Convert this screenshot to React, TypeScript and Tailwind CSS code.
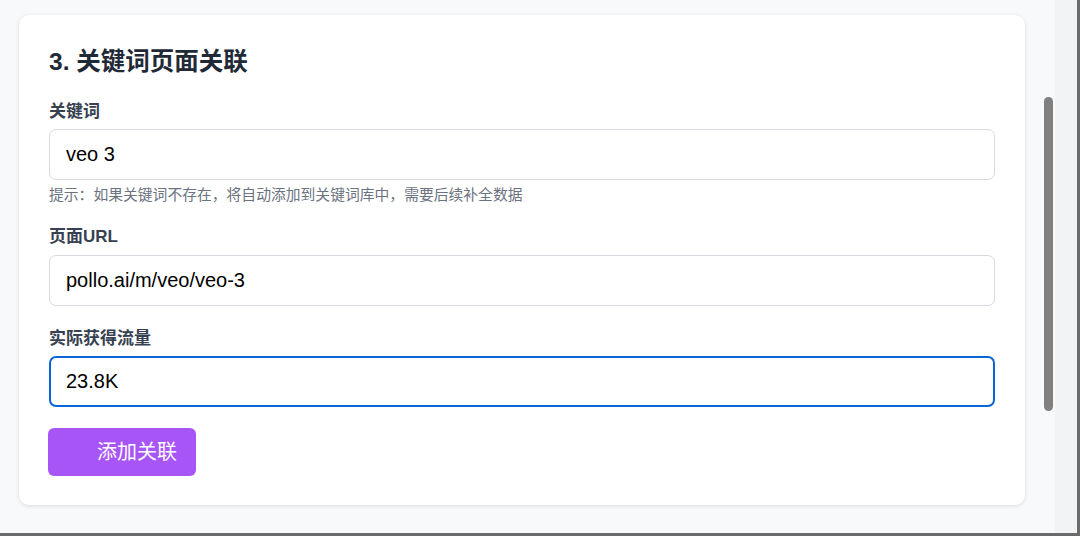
import { useState } from "react";

const font = "font-['Helvetica','Liberation_Sans','Noto_Sans_CJK_SC',sans-serif]";

export default function App() {
  const [keyword, setKeyword] = useState("veo 3");
  const [url, setUrl] = useState("pollo.ai/m/veo/veo-3");
  const [traffic, setTraffic] = useState("23.8K");

  return (
    <div className={`relative flex h-[536px] w-[1080px] overflow-hidden border-r-[3px] border-b-[3px] border-[#6b6b6b] bg-[#f8f9fb] ${font}`}>
      <div className="w-[1055px] shrink-0 pt-[15px] pl-[19px] pr-[30px]">
        <div className="rounded-[10px] bg-white px-[30px] pt-[31px] pb-[29px] shadow-[0_1px_4px_rgba(0,0,0,0.12)]">
          <h2 className="mb-[22px] text-[24.5px] leading-[32px] font-bold text-[#1f2937]">
            3. 关键词页面关联
          </h2>

          <label className="mb-[5px] block text-[17px] leading-6 font-semibold text-[#374151]">关键词</label>
          <input
            value={keyword}
            onChange={(e) => setKeyword(e.target.value)}
            className="block h-[51px] w-full rounded-[7px] border border-[#d6d9de] px-4 text-[20px] text-black outline-none"
          />
          <p className="mt-[5px] text-[14.8px] leading-5 text-[#6b7280]">
            提示：如果关键词不存在，将自动添加到关键词库中，需要后续补全数据
          </p>

          <label className="mt-[20px] mb-[6px] block text-[17px] leading-6 font-semibold text-[#374151]">页面URL</label>
          <input
            value={url}
            onChange={(e) => setUrl(e.target.value)}
            className="block h-[51px] w-full rounded-[7px] border border-[#d6d9de] px-4 text-[20px] text-black outline-none"
          />

          <label className="mt-[21px] mb-[5px] block text-[17px] leading-6 font-semibold text-[#374151]">实际获得流量</label>
          <input
            value={traffic}
            onChange={(e) => setTraffic(e.target.value)}
            className="block h-[51px] w-full rounded-[7px] border-2 border-[#0a66d6] px-[15px] text-[20px] text-black outline-none"
          />

          <button className="mt-[21px] -ml-px flex h-[48px] w-[148px] items-center rounded-[6px] bg-[#a855f7] pl-[49px] text-[20px] text-white">
            添加关联
          </button>
        </div>
      </div>
      <div className="flex-1 bg-[#f2f3f5]" />
      {/* overlay scrollbar */}
      <div className="absolute top-[97px] left-[1044px] h-[314px] w-[9px] rounded-full bg-[#808080]" />
    </div>
  );
}
